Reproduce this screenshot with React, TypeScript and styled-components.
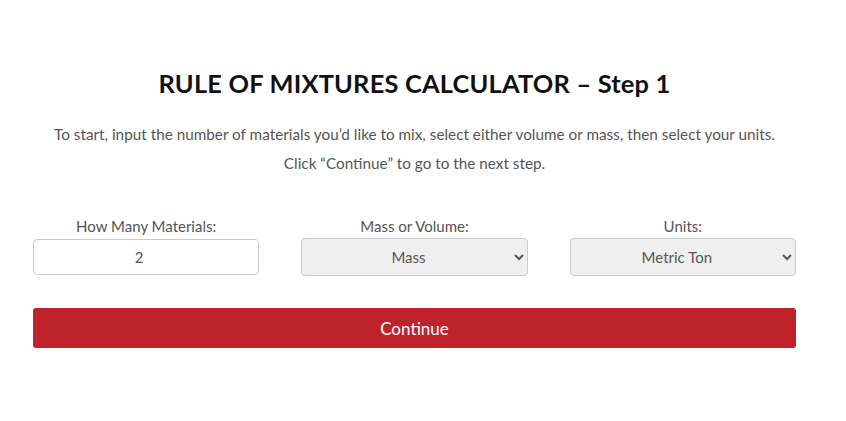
import { useState } from "react";
import styled, { createGlobalStyle } from "styled-components";

const GlobalStyle = createGlobalStyle`
    * {
        box-sizing: border-box;
    }
    body {
        margin: 0;
        background: #fff;
        font-family: Lato, "Open Sans", sans-serif;
    }
`;

const Page = styled.div`
    width: 846px;
    height: 421px;
    padding: 65px 0 0 33px;
`;

const Calculator = styled.div`
    width: 763px;
`;

const Title = styled.h1`
    margin: 0;
    text-align: center;
    font-size: 25.4px;
    line-height: 36px;
    font-weight: 700;
    color: #111;
    letter-spacing: 0.2px;
`;

const Intro = styled.p`
    margin: 19px 0 0;
    text-align: center;
    font-size: 15.3px;
    line-height: 29px;
    color: #555;
`;

const Fields = styled.div`
    margin-top: 37px;
    display: grid;
    grid-template-columns: repeat(3, 1fr);
    column-gap: 42px;
`;

const Field = styled.div`
    display: flex;
    flex-direction: column;
    align-items: stretch;
`;

const Label = styled.label`
    text-align: center;
    font-size: 15px;
    line-height: 22px;
    color: #555;
`;

const NumberInput = styled.input`
    margin-top: 2px;
    height: 36px;
    border: 1px solid #ccc;
    border-radius: 4px;
    background: #fff;
    padding: 0 16px 0 2px;
    text-align: center;
    font-family: inherit;
    font-size: 15px;
    color: #555;
    outline: none;
`;

const Select = styled.select`
    margin-top: 1px;
    height: 38px;
    border: 1px solid #ccc;
    border-radius: 4px;
    background-color: #efefef;
    text-align: center;
    text-align-last: center;
    font-family: inherit;
    font-size: 15px;
    color: #555;
    padding: 0 8px;
    outline: none;
`;

const ContinueButton = styled.button`
    margin-top: 32px;
    width: 100%;
    height: 40px;
    border: none;
    border-radius: 3px;
    background: #be222a;
    color: #fff;
    font-family: inherit;
    font-size: 17px;
    cursor: pointer;
`;

export default function App() {
    const [count, setCount] = useState("2");
    const [kind, setKind] = useState("mass");
    const [unit, setUnit] = useState("metric-ton");

    return (
        <Page>
            <GlobalStyle />
            <Calculator>
                <Title>RULE OF MIXTURES CALCULATOR – Step 1</Title>
                <Intro>
                    To start, input the number of materials you’d like to mix, select either volume or mass, then select your units.
                    <br />
                    Click “Continue” to go to the next step.
                </Intro>
                <Fields>
                    <Field>
                        <Label htmlFor="count">How Many Materials:</Label>
                        <NumberInput id="count" value={count} onChange={(e) => setCount(e.target.value)} />
                    </Field>
                    <Field>
                        <Label htmlFor="kind">Mass or Volume:</Label>
                        <Select id="kind" value={kind} onChange={(e) => setKind(e.target.value)}>
                            <option value="mass">Mass</option>
                            <option value="volume">Volume</option>
                        </Select>
                    </Field>
                    <Field>
                        <Label htmlFor="unit">Units:</Label>
                        <Select id="unit" value={unit} onChange={(e) => setUnit(e.target.value)}>
                            <option value="metric-ton">Metric Ton</option>
                            <option value="kg">Kilogram</option>
                        </Select>
                    </Field>
                </Fields>
                <ContinueButton>Continue</ContinueButton>
            </Calculator>
        </Page>
    );
}
